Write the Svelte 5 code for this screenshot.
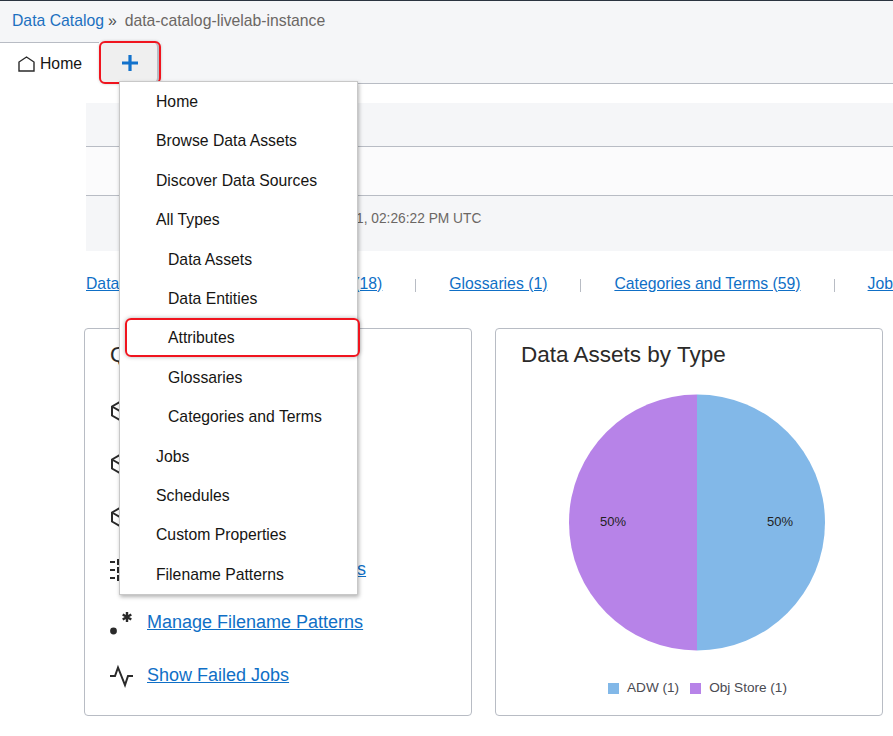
<script>
  const menu = [
    { label: 'Home' },
    { label: 'Browse Data Assets' },
    { label: 'Discover Data Sources' },
    { label: 'All Types' },
    { label: 'Data Assets', sub: true },
    { label: 'Data Entities', sub: true },
    { label: 'Attributes', sub: true, marked: true },
    { label: 'Glossaries', sub: true },
    { label: 'Categories and Terms', sub: true },
    { label: 'Jobs' },
    { label: 'Schedules' },
    { label: 'Custom Properties' },
    { label: 'Filename Patterns' }
  ];

  const counts = ['Data Assets (2)', 'Data Entities (18)', 'Glossaries (1)', 'Categories and Terms (59)', 'Jobs (12)'];

  const tasks = [
    { icon: 'cube', label: 'Create Data Asset' },
    { icon: 'cube', label: 'Create Glossary' },
    { icon: 'cube', label: 'Harvest Data Asset' },
    { icon: 'props', label: 'Manage Custom Properties' },
    { icon: 'pattern', label: 'Manage Filename Patterns' },
    { icon: 'pulse', label: 'Show Failed Jobs' }
  ];
</script>

<div class="page">
  <header class="crumbs">
    <a href="#top">Data Catalog</a>
    <span class="sep">»</span>
    <span class="instance">data-catalog-livelab-instance</span>
  </header>

  <nav class="tabs">
    <div class="tab home">
      <svg width="17" height="16" viewBox="0 0 17 16" fill="none" stroke="#2a2a2a" stroke-width="1.4">
        <path d="M1 15V6L8.5 1 16 6v9z" />
      </svg>
      <span>Home</span>
    </div>
    <div class="tab plus">
      <svg width="16" height="16" viewBox="0 0 16 16" stroke="#1272cc" stroke-width="3.2">
        <path d="M0 8h16M8 0v16" />
      </svg>
    </div>
    <div class="tab-rest"></div>
  </nav>

  <main class="content">
    <section class="summary">
      <div class="sum-row first">Summary</div>
      <div class="sum-row mid">Active</div>
      <div class="sum-row last">Created: Oct 5, 2021, 02:26:22 PM UTC</div>
    </section>

    <div class="counts">
      {#each counts as c, i}
        {#if i > 0}<span class="bar"></span>{/if}
        <a href="#top">{c}</a>
      {/each}
    </div>

    <div class="cards">
      <section class="card tasks">
        <h2>Quick Actions</h2>
        <ul>
          {#each tasks as t}
            <li>
              <span class="ico">
                {#if t.icon === 'cube'}
                  <svg width="24" height="24" viewBox="0 0 24 24" fill="none" stroke="#2a2a2a" stroke-width="2">
                    <path d="M10 3l8 4.5v9l-8 4.5-8-4.5v-9zM2 7.5l8 4.5 8-4.5M10 12v9" />
                  </svg>
                {:else if t.icon === 'props'}
                  <svg width="24" height="24" viewBox="0 0 24 24" fill="#2a2a2a">
                    <path d="M0 3h5v2H0zM0 11h5v2H0zM0 19h5v2H0zM7 1h2v6H7zM7 9h2v6H7zM7 17h2v6H7zM11 3h10v2H11zM11 11h10v2H11zM11 19h10v2H11z" />
                  </svg>
                {:else if t.icon === 'pattern'}
                  <svg width="24" height="24" viewBox="0 0 24 24" fill="none" stroke="#2a2a2a" stroke-width="2.4">
                    <circle cx="3.5" cy="20" r="3.4" fill="#2a2a2a" stroke="none" />
                    <path d="M17 1v10M12.7 3.5l8.6 5M21.3 3.5l-8.6 5" />
                  </svg>
                {:else}
                  <svg width="24" height="24" viewBox="0 0 24 24" fill="none" stroke="#2a2a2a" stroke-width="2">
                    <path d="M0 12h5l3-8.5L15 21l3-9h5" />
                  </svg>
                {/if}
              </span>
              <a href="#top">{t.label}</a>
            </li>
          {/each}
        </ul>
      </section>

      <section class="card chart">
        <h2>Data Assets by Type</h2>
        <svg class="pie" width="258" height="257" viewBox="0 0 258 257">
          <path d="M129 0.5a128 128 0 0 1 0 256z" fill="#82b8e8" />
          <path d="M129 0.5a128 128 0 0 0 0 256z" fill="#b783e8" />
          <text x="212" y="132" text-anchor="middle">50%</text>
          <text x="45" y="132" text-anchor="middle">50%</text>
        </svg>
        <div class="legend">
          <span class="swatch adw"></span><span>ADW (1)</span>
          <span class="swatch obj"></span><span>Obj Store (1)</span>
        </div>
      </section>
    </div>
  </main>

  <ul class="menu">
    {#each menu as m}
      <li class:sub={m.sub} class:marked={m.marked}>{m.label}</li>
    {/each}
  </ul>
</div>

<style>
  :global(body) {
    margin: 0;
    background: #fff;
  }

  .page {
    position: relative;
    width: 893px;
    height: 736px;
    overflow: hidden;
    font-family: "Liberation Sans", Arial, sans-serif;
    font-size: 15.75px;
    color: #161513;
  }

  a {
    color: #0f6fc6;
  }

  .crumbs {
    height: 42px;
    box-sizing: border-box;
    border-top: 1px solid #2b3440;
    background: #f5f6f8;
    padding-top: 11px;
    line-height: 18px;
    display: flex;
  }

  .crumbs a {
    margin-left: 12px;
    color: #1c70c0;
    text-decoration: none;
  }

  .crumbs .sep {
    margin-left: 4px;
    color: #4f4f4f;
  }

  .crumbs .instance {
    margin-left: 8px;
    color: #6b6764;
  }

  .tabs {
    display: flex;
    height: 42px;
  }

  .tab {
    display: flex;
    align-items: center;
    box-sizing: border-box;
  }

  .home {
    width: 99px;
    padding-left: 18px;
    gap: 5px;
    background: #fff;
    border-top: 1px solid #b8bcc4;
    padding-top: 1px;
  }

  .plus {
    width: 62px;
    height: 43px;
    margin-top: -1px;
    justify-content: center;
    border: 2px solid #f0141e;
    border-radius: 6px;
    background: #efefef;
    box-shadow: inset -3px 0 0 -1px #b8bcc4, 0 0 3px rgba(0, 0, 0, 0.2);
    position: relative;
    z-index: 1;
  }

  .tab-rest {
    flex: 1;
    background: #f5f6f8;
    border-bottom: 1px solid #b8bcc4;
  }

  .content {
    padding: 19px 0 0 84px;
  }

  .summary {
    margin-left: 2px;
    height: 148px;
    background: #f5f6f8;
    color: #6b6764;
    font-size: 13.75px;
    display: flex;
    flex-direction: column;
  }

  .sum-row {
    padding-left: 150px;
    box-sizing: border-box;
  }

  .first {
    height: 44px;
    border-bottom: 1px solid #b8bcc4;
  }

  .mid {
    height: 49px;
    background: #fbfbfc;
    border-bottom: 1px solid #b8bcc4;
  }

  .last {
    padding-top: 15px;
  }

  .counts {
    margin: 22px 0 0 2px;
    height: 21px;
    display: flex;
    align-items: center;
    white-space: nowrap;
    line-height: 20px;
  }

  .bar {
    width: 1px;
    height: 13px;
    margin: 4px 33px 0;
    background: #b8bcc4;
    flex: none;
  }

  .cards {
    display: flex;
    gap: 23px;
    margin-top: 34px;
  }

  .card {
    width: 388px;
    height: 388px;
    box-sizing: border-box;
    border: 1px solid #b8bcc4;
    border-radius: 4px;
    padding: 12px 25px;
    flex: none;
  }

  h2 {
    margin: 0;
    font-size: 22.5px;
    font-weight: 400;
    line-height: 28px;
    color: #2b2a29;
  }

  .tasks ul {
    list-style: none;
    margin: 15px 0 0;
    padding: 0;
  }

  .tasks li {
    height: 53px;
    display: flex;
    align-items: center;
    gap: 13px;
    font-size: 18px;
  }

  .ico {
    width: 24px;
    height: 24px;
    display: block;
    flex: none;
  }

  .chart {
    display: flex;
    flex-direction: column;
  }

  .pie {
    display: block;
    margin: 25px 0 0 47px;
  }

  .pie text {
    font-size: 13px;
    fill: #222;
  }

  .legend {
    display: flex;
    align-items: center;
    justify-content: center;
    margin: 29px 0 0 17px;
    font-size: 13.6px;
    line-height: 16px;
    color: #4a4a52;
  }

  .swatch {
    width: 11px;
    height: 11px;
    margin-right: 8px;
  }

  .swatch.obj {
    margin-left: 11px;
  }

  .adw {
    background: #82b8e8;
  }

  .obj {
    background: #b783e8;
  }

  .menu {
    position: absolute;
    left: 119px;
    top: 81px;
    width: 239px;
    box-sizing: border-box;
    margin: 0;
    padding: 0;
    list-style: none;
    background: #fff;
    border: 1px solid #c8c8c8;
    box-shadow: 1px 2px 4px rgba(0, 0, 0, 0.3);
    z-index: 2;
  }

  .menu li {
    height: 39.4px;
    line-height: 40px;
    padding-left: 36px;
    white-space: nowrap;
    position: relative;
  }

  .menu li.sub {
    padding-left: 48px;
  }

  .menu li.marked::after {
    content: "";
    position: absolute;
    left: 5px;
    right: -3px;
    top: 0;
    bottom: 1px;
    border: 2px solid #f0141e;
    border-radius: 6px;
    box-shadow: 0 0 4px rgba(0, 0, 0, 0.3);
  }
</style>
